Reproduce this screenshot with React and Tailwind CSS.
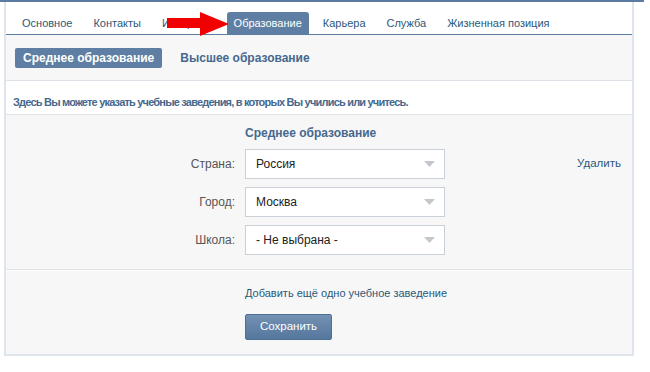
import React from 'react';

const tabs = ['Основное', 'Контакты', 'Интересы', 'Образование', 'Карьера', 'Служба', 'Жизненная позиция'];

const Select = ({ value }) => (
    <div className="w-[200px] h-[30px] bg-white border border-[#c9d0d8] flex items-center justify-between pl-[10px] pr-[9px] text-[12px] text-[#222]">
        <span>{value}</span>
        <svg width="11" height="6" viewBox="0 0 11 6">
            <path d="M0 0 L11 0 L5.5 6 Z" fill="#c4c8cd" />
        </svg>
    </div>
);

const Row = ({ label, value, extra }) => (
    <div className="flex items-center h-[30px]">
        <div className="w-[239px] text-right pr-[10px] text-[12px] text-[#555]">{label}</div>
        <Select value={value} />
        {extra && <div className="ml-auto pr-[11px] text-[11.5px] text-[#2b587a]">{extra}</div>}
    </div>
);

const App = () => {
    return (
        <div className="w-[650px] h-[372px] bg-white font-['Liberation_Sans',Arial,sans-serif] overflow-hidden">
            <div className="w-[644px] h-[2px] bg-[#5b7ba0]" />
            <div className="ml-[4px] w-[630px] border-x-2 border-b-2 border-[#dfe5ec]">
                {/* tabs */}
                <div className="relative h-[33px] bg-white border-b border-[#5b7ba0] flex items-end pl-[9px]">
                    {tabs.map((t) => (
                        <div
                            key={t}
                            className={`h-[22px] px-[7px] mr-[7px] flex items-center text-[11px] rounded-t-[3px] ${
                                t === 'Образование' ? 'bg-[#5e7fa3] text-white' : 'text-[#2b587a]'
                            }`}
                        >
                            {t}
                        </div>
                    ))}
                    <svg className="absolute left-[161px] top-[10px]" width="62" height="24" viewBox="0 0 62 24">
                        <path d="M0 6 L33 6 L33 0 L62 12 L33 24 L33 16 L0 16 Z" fill="#f00000" />
                    </svg>
                </div>

                {/* sub tabs */}
                <div className="h-[46px] bg-[#f7f7f7] border-b border-[#dde2e8] flex items-center pl-[9px] gap-[18px]">
                    <div className="h-[20px] px-[8px] bg-[#5e7fa3] rounded-[2px] text-white font-bold text-[12px] flex items-center">
                        Среднее образование
                    </div>
                    <div className="text-[#45688e] font-bold text-[12px]">Высшее образование</div>
                </div>

                {/* info */}
                <div className="h-[34px] bg-white border-b border-[#dde2e8] flex items-end pb-[5px] pl-[7px]">
                    <span className="text-[#45688e] font-bold text-[11px] tracking-[-0.8px] leading-[14px]">
                        Здесь Вы можете указать учебные заведения, в которых Вы учились или учитесь.
                    </span>
                </div>

                {/* form */}
                <div className="h-[155px] bg-[#f7f7f7] border-b border-[#dde2e8] pt-[9px] flex flex-col">
                    <div className="pl-[239px] text-[#45688e] font-bold text-[12px] h-[18px]">Среднее образование</div>
                    <div className="flex flex-col gap-[8px] mt-[7px]">
                        <Row label="Страна:" value="Россия" extra="Удалить" />
                        <Row label="Город:" value="Москва" />
                        <Row label="Школа:" value="- Не выбрана -" />
                    </div>
                </div>

                {/* actions */}
                <div className="h-[84px] bg-[#f7f7f7] border-t border-white pl-[239px] pt-[15px] flex flex-col items-start">
                    <div className="text-[11px] leading-[14px] text-[#2b587a]">Добавить ещё одно учебное заведение</div>
                    <button className="mt-[14px] w-[87px] h-[26px] rounded-[2px] bg-gradient-to-b from-[#7391b3] to-[#55779c] border border-[#4f7096] text-white text-[11.5px]">
                        Сохранить
                    </button>
                </div>
            </div>
        </div>
    );
};

export default App;
